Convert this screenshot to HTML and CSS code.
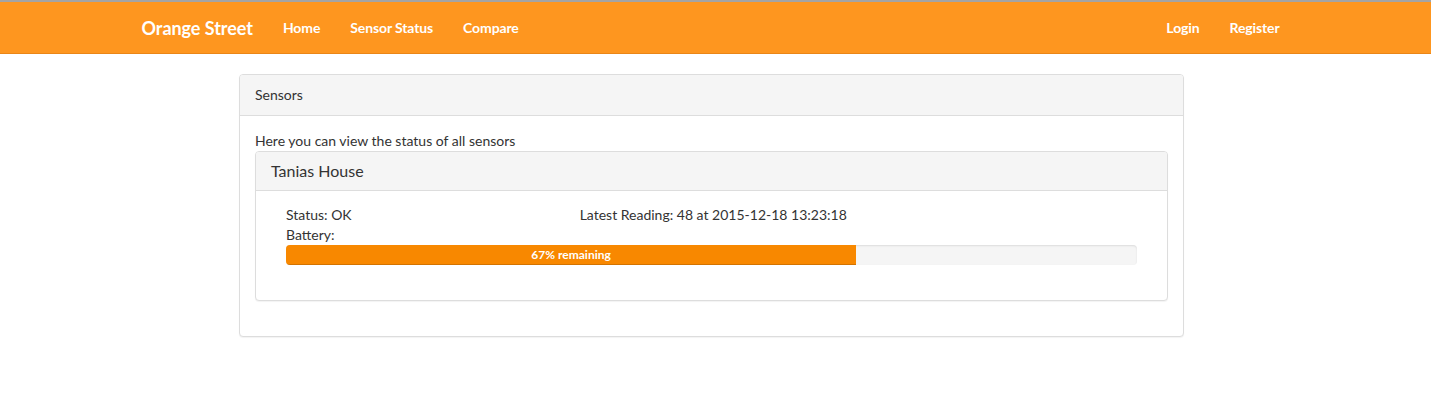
FILE: index.html
```
<!DOCTYPE html>
<html>
<head>
<meta charset="utf-8">
<link rel="stylesheet" href="styles.css">
</head>
<body>
<nav class="navbar">
  <div class="container nav-inner">
    <div class="nav-left">
      <a class="brand">Orange Street</a>
      <a class="nav-link">Home</a>
      <a class="nav-link">Sensor Status</a>
      <a class="nav-link">Compare</a>
    </div>
    <div class="nav-right">
      <a class="nav-link">Login</a>
      <a class="nav-link">Register</a>
    </div>
  </div>
</nav>
<div class="container">
  <div class="main-col">
    <div class="panel outer">
      <div class="panel-heading">Sensors</div>
      <div class="panel-body">
        <p class="intro">Here you can view the status of all sensors</p>
        <div class="panel inner">
          <div class="panel-heading"><h3 class="panel-title">Tanias House</h3></div>
          <div class="panel-body inner-body">
            <div class="content">
              <div class="row">
                <div class="col-4">Status: OK</div>
                <div class="col-8">Latest Reading: 48 at 2015-12-18 13:23:18</div>
              </div>
              <div class="battery">Battery:</div>
              <div class="progress">
                <div class="progress-bar" style="width: 67%">67% remaining</div>
              </div>
            </div>
          </div>
        </div>
      </div>
    </div>
  </div>
</div>
</body>
</html>
```
FILE: styles.css
```
* { box-sizing: border-box; }
html, body { margin: 0; padding: 0; }
body {
  font-family: Lato, "Liberation Sans", sans-serif;
  font-size: 14px;
  line-height: 20px;
  color: #333;
  background: #fff;
  border-top: 2px solid #a4a4a4;
}
a { text-decoration: none; color: inherit; cursor: pointer; }
.container {
  width: 1170px;
  margin-left: calc((100% - 1178px) / 2);
  padding: 0 15px;
}
.navbar {
  background: #fe961f;
  border-bottom: 1px solid #ea8617;
  height: 52px;
  padding-top: 1px;
  margin-bottom: 20px;
}
.nav-inner {
  display: flex;
  justify-content: space-between;
  height: 50px;
}
.nav-left, .nav-right { display: flex; align-items: center; height: 50px; }
.nav-left { margin-left: -15px; }
.nav-right { margin-right: -13px; }
.brand {
  color: #fff;
  font-size: 18px;
  font-weight: 700;
  padding: 15px;
  line-height: 20px;
  letter-spacing: -0.05px;
}
.nav-link {
  color: #fff;
  font-weight: 700;
  padding: 15px;
  line-height: 20px;
  letter-spacing: -0.12px;
}
.main-col {
  margin-left: 82.5px;
  width: 975px;
  padding: 0 15px;
}
.panel {
  border: 1px solid #ddd;
  border-radius: 4px;
  background: #fff;
  box-shadow: 0 1px 1px rgba(0,0,0,0.05);
  margin-bottom: 20px;
}
.panel-heading {
  background: #f5f5f5;
  border-bottom: 1px solid #ddd;
  padding: 10px 15px;
  border-radius: 3px 3px 0 0;
}
.panel-title {
  margin: 0;
  font-size: 16px;
  font-weight: 400;
  line-height: 18px;
}
.panel-body { padding: 15px; }
.intro { margin: 0; }
.inner-body { padding: 14px 15px 15px; }
.content { padding: 0 15px; }
.row { display: flex; margin: 0 -15px; }
.col-4 { width: 33.3333%; padding: 0 15px; }
.col-8 { width: 66.6667%; padding: 0 15px; }
.progress {
  height: 20px;
  background: #f5f5f5;
  border-radius: 4px;
  overflow: hidden;
  margin-bottom: 20px;
  box-shadow: inset 0 1px 2px rgba(0,0,0,0.1);
}
.progress-bar {
  height: 20px;
  background: #f88800;
  color: #fff;
  font-size: 12px;
  font-weight: 700;
  line-height: 20px;
  text-align: center;
  box-shadow: inset 0 -1px 0 rgba(0,0,0,0.15);
}
```
